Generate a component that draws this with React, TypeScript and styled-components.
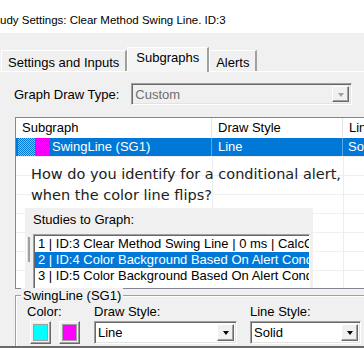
import React from 'react';
import styled, { createGlobalStyle } from 'styled-components';

const GlobalStyle = createGlobalStyle`
  html, body {
    margin: 0;
    padding: 0;
    background: #f0f0f0;
  }
`;

const Window = styled.div`
  width: 364px;
  height: 348px;
  overflow: hidden;
  display: flex;
  flex-direction: column;
  background: #f0f0f0;
  font-family: "Liberation Sans", Arial, sans-serif;
  font-size: 13px;
  color: #000;
`;

const TitleBar = styled.div`
  height: 33px;
  flex: none;
  background: #fff;
  box-sizing: border-box;
  padding-top: 13px;
  font-size: 11.5px;
  line-height: 14px;
  white-space: nowrap;
`;

const TabStrip = styled.div`
  display: flex;
  align-items: flex-end;
  height: 24px;
  margin-top: 14px;
  padding-left: 1px;
  border-bottom: 1px solid #fff;
  flex: none;
`;

const Tab = styled.div<{ $active?: boolean }>`
  box-sizing: border-box;
  height: ${(p) => (p.$active ? '25px' : '21px')};
  margin-bottom: ${(p) => (p.$active ? '-1px' : '0')};
  padding: ${(p) => (p.$active ? '2px 8px 0' : '4px 6px 0')};
  line-height: 15px;
  background: ${(p) => (p.$active ? '#f5f5f5' : '#f0f0f0')};
  border-top: 1px solid #fff;
  border-left: 1px solid #fff;
  border-right: 2px solid #a0a0a0;
  position: relative;
  z-index: ${(p) => (p.$active ? 1 : 0)};
  white-space: nowrap;
`;

const Panel = styled.div`
  flex: 1;
  display: flex;
  flex-direction: column;
`;

const DrawTypeRow = styled.div`
  display: flex;
  align-items: center;
  margin-top: 11px;
  padding-left: 14px;
  gap: 12px;
`;

const Combo = styled.div<{ $width: number; $disabled?: boolean }>`
  box-sizing: border-box;
  width: ${(p) => p.$width}px;
  height: ${(p) => (p.$disabled ? 22 : 23)}px;
  display: flex;
  align-items: center;
  padding-left: 3px;
  border: 1px solid;
  border-color: #a0a0a0 #fff #fff #a0a0a0;
  box-shadow: inset 1px 1px 0 #696969, inset -1px -1px 0 #e3e3e3;
  background: ${(p) => (p.$disabled ? '#f0f0f0' : '#fff')};
  color: ${(p) => (p.$disabled ? '#6d6d6d' : '#000')};
  white-space: nowrap;
`;

const ComboText = styled.span`
  flex: 1;
  line-height: 15px;
`;

const DropButton = styled.div<{ $disabled?: boolean }>`
  box-sizing: border-box;
  width: 17px;
  height: calc(100% - 4px);
  margin-right: 2px;
  background: #f0f0f0;
  border: 1px solid;
  border-color: #fff #696969 #696969 #fff;
  box-shadow: inset -1px -1px 0 #a0a0a0;
  display: flex;
  align-items: center;
  justify-content: center;

  &::after {
    content: '';
    border-left: 3.5px solid transparent;
    border-right: 3.5px solid transparent;
    border-top: 4px solid ${(p) => (p.$disabled ? '#a0a0a0' : '#000')};
    margin-top: 1px;
  }
`;

const ListView = styled.div`
  box-sizing: border-box;
  margin: 12px 0 0 15px;
  width: 360px;
  height: 172px;
  flex: none;
  border: 1px solid #828790;
  background: #fff;
  overflow: hidden;
`;

const HeaderRow = styled.div`
  display: flex;
  height: 20px;
  line-height: 20px;
  white-space: nowrap;
`;

const HeaderCell = styled.div<{ $width?: number }>`
  box-sizing: border-box;
  width: ${(p) => (p.$width ? `${p.$width}px` : 'auto')};
  flex: ${(p) => (p.$width ? 'none' : '1')};
  padding-left: 6px;
  border-right: 1px solid #e5e5e5;
  overflow: hidden;
`;

const ListBody = styled.div`
  height: 150px;
  background:
    linear-gradient(90deg, transparent 196px, #ececec 196px 197px, transparent 197px 327px, #ececec 327px 328px, transparent 328px),
    repeating-linear-gradient(180deg, transparent 0 18px, #efefef 18px 19px);
  overflow: hidden;
`;

const SelectedRow = styled.div`
  display: flex;
  height: 18px;
  line-height: 18px;
  background: #0078d7;
  color: #fff;
  white-space: nowrap;
`;

const Cell = styled.div<{ $width?: number; $pad?: number }>`
  box-sizing: border-box;
  display: flex;
  align-items: center;
  width: ${(p) => (p.$width ? `${p.$width}px` : 'auto')};
  flex: ${(p) => (p.$width ? 'none' : '1')};
  padding-left: ${(p) => p.$pad ?? 6}px;
  border-right: 1px solid rgba(255, 255, 255, 0.35);
  overflow: hidden;
`;

const Swatch = styled.span<{ $color: string; $width: number }>`
  width: ${(p) => p.$width}px;
  height: 18px;
  flex: none;
  background: repeating-conic-gradient(${(p) => p.$color} 0 25%, #0078d7 0 50%) 0 0 / 2px 2px;
`;

const SubgraphName = styled.span`
  margin-left: 2px;
`;

const Question = styled.div`
  padding: 8px 0 0 15px;
  font-family: "DejaVu Sans", Verdana, sans-serif;
  font-size: 14.5px;
  line-height: 21px;
  color: #222;
  white-space: nowrap;
`;

const StudiesPanel = styled.div`
  margin: 2px 0 0 9px;
  width: 288px;
  height: 90px;
  background: #f0f0f0;
`;

const StudiesLabel = styled.div`
  padding: 4px 0 0 8px;
  line-height: 16px;
`;

const StudiesRow = styled.div`
  display: flex;
  align-items: flex-start;
  margin-top: 6px;
`;

const Grip = styled.div`
  box-sizing: border-box;
  width: 4px;
  height: 25px;
  margin: 3px 3px 0 1px;
  border-left: 1px solid #fff;
  border-right: 2px solid #a0a0a0;
  background: #e3e3e3;
`;

const StudiesList = styled.div`
  box-sizing: border-box;
  width: 277px;
  height: 60px;
  border: 1px solid;
  border-color: #a0a0a0 #fff #fff #a0a0a0;
  box-shadow: inset 1px 1px 0 #696969;
  padding: 1px 0 0 1px;
  background: #fff;
  overflow: hidden;
`;

const StudyItem = styled.div<{ $selected?: boolean }>`
  height: 16px;
  line-height: 16px;
  padding-left: 3px;
  font-size: 13px;
  white-space: nowrap;
  background: ${(p) => (p.$selected ? '#0078d7' : 'transparent')};
  color: ${(p) => (p.$selected ? '#fff' : '#000')};
`;

const GroupBox = styled.div`
  margin: 6px 0 0 15px;
  border-top: 1px solid #a0a0a0;
  border-left: 1px solid #a0a0a0;
  box-shadow: inset 1px 1px 0 #fff;
  padding-left: 11px;
  flex: 1;
`;

const Legend = styled.div`
  width: fit-content;
  margin: -8px 0 0 -6px;
  padding: 0 2px;
  line-height: 15px;
  background: #f0f0f0;
`;

const FieldRow = styled.div`
  display: flex;
  margin-top: 1px;
`;

const Field = styled.div<{ $width: number; $gap?: number }>`
  width: ${(p) => p.$width}px;
  margin-right: ${(p) => p.$gap ?? 0}px;
  flex: none;
  display: flex;
  flex-direction: column;
  gap: 2px;
`;

const FieldLabel = styled.div`
  line-height: 15px;
`;

const Swatches = styled.div`
  display: flex;
  gap: 8px;
  padding-left: 3px;
`;

const ColorButton = styled.div<{ $color: string }>`
  box-sizing: border-box;
  width: 21px;
  height: 23px;
  padding: 3px;
  background: #f0f0f0;
  border: 1px solid;
  border-color: #fff #696969 #696969 #fff;
  box-shadow: inset -1px -1px 0 #a0a0a0;

  &::after {
    content: '';
    display: block;
    width: 100%;
    height: 100%;
    background: ${(p) => p.$color};
    box-shadow: 0 0 0 1px #a0a0a0;
  }
`;

const BottomEdge = styled.div`
  height: 2px;
  flex: none;
  background: #6a6a6a;
`;

const App = () => {
  return (
    <>
      <GlobalStyle />
      <Window>
        <TitleBar>udy Settings: Clear Method Swing Line. ID:3</TitleBar>
        <TabStrip>
          <Tab>Settings and Inputs</Tab>
          <Tab $active>Subgraphs</Tab>
          <Tab>Alerts</Tab>
        </TabStrip>
        <Panel>
          <DrawTypeRow>
            <span>Graph Draw Type:</span>
            <Combo $width={221} $disabled>
              <ComboText>Custom</ComboText>
              <DropButton $disabled />
            </Combo>
          </DrawTypeRow>
          <ListView>
            <HeaderRow>
              <HeaderCell $width={196}>Subgraph</HeaderCell>
              <HeaderCell $width={131}>Draw Style</HeaderCell>
              <HeaderCell>Line Style</HeaderCell>
            </HeaderRow>
            <ListBody>
              <SelectedRow>
                <Cell $width={196} $pad={2}>
                  <Swatch $color="#00ffff" $width={17} />
                  <Swatch $color="#ff00ff" $width={15} />
                  <SubgraphName>SwingLine (SG1)</SubgraphName>
                </Cell>
                <Cell $width={131}>Line</Cell>
                <Cell $pad={5}>Solid</Cell>
              </SelectedRow>
              <Question>
                How do you identify for a conditional alert,
                <br />
                when the color line flips?
              </Question>
              <StudiesPanel>
                <StudiesLabel>Studies to Graph:</StudiesLabel>
                <StudiesRow>
                  <Grip />
                  <StudiesList>
                    <StudyItem>1 | ID:3  Clear Method Swing Line | 0 ms | CalcC</StudyItem>
                    <StudyItem $selected>2 | ID:4  Color Background Based On Alert Condition</StudyItem>
                    <StudyItem>3 | ID:5  Color Background Based On Alert Condition</StudyItem>
                  </StudiesList>
                </StudiesRow>
              </StudiesPanel>
            </ListBody>
          </ListView>
          <GroupBox>
            <Legend>SwingLine (SG1)</Legend>
            <FieldRow>
              <Field $width={67}>
                <FieldLabel>Color:</FieldLabel>
                <Swatches>
                  <ColorButton $color="#00ffff" />
                  <ColorButton $color="#ff00ff" />
                </Swatches>
              </Field>
              <Field $width={143} $gap={13}>
                <FieldLabel>Draw Style:</FieldLabel>
                <Combo $width={143}>
                  <ComboText>Line</ComboText>
                  <DropButton />
                </Combo>
              </Field>
              <Field $width={111}>
                <FieldLabel>Line Style:</FieldLabel>
                <Combo $width={111}>
                  <ComboText>Solid</ComboText>
                  <DropButton />
                </Combo>
              </Field>
            </FieldRow>
          </GroupBox>
          <BottomEdge />
        </Panel>
      </Window>
    </>
  );
};

export default App;
